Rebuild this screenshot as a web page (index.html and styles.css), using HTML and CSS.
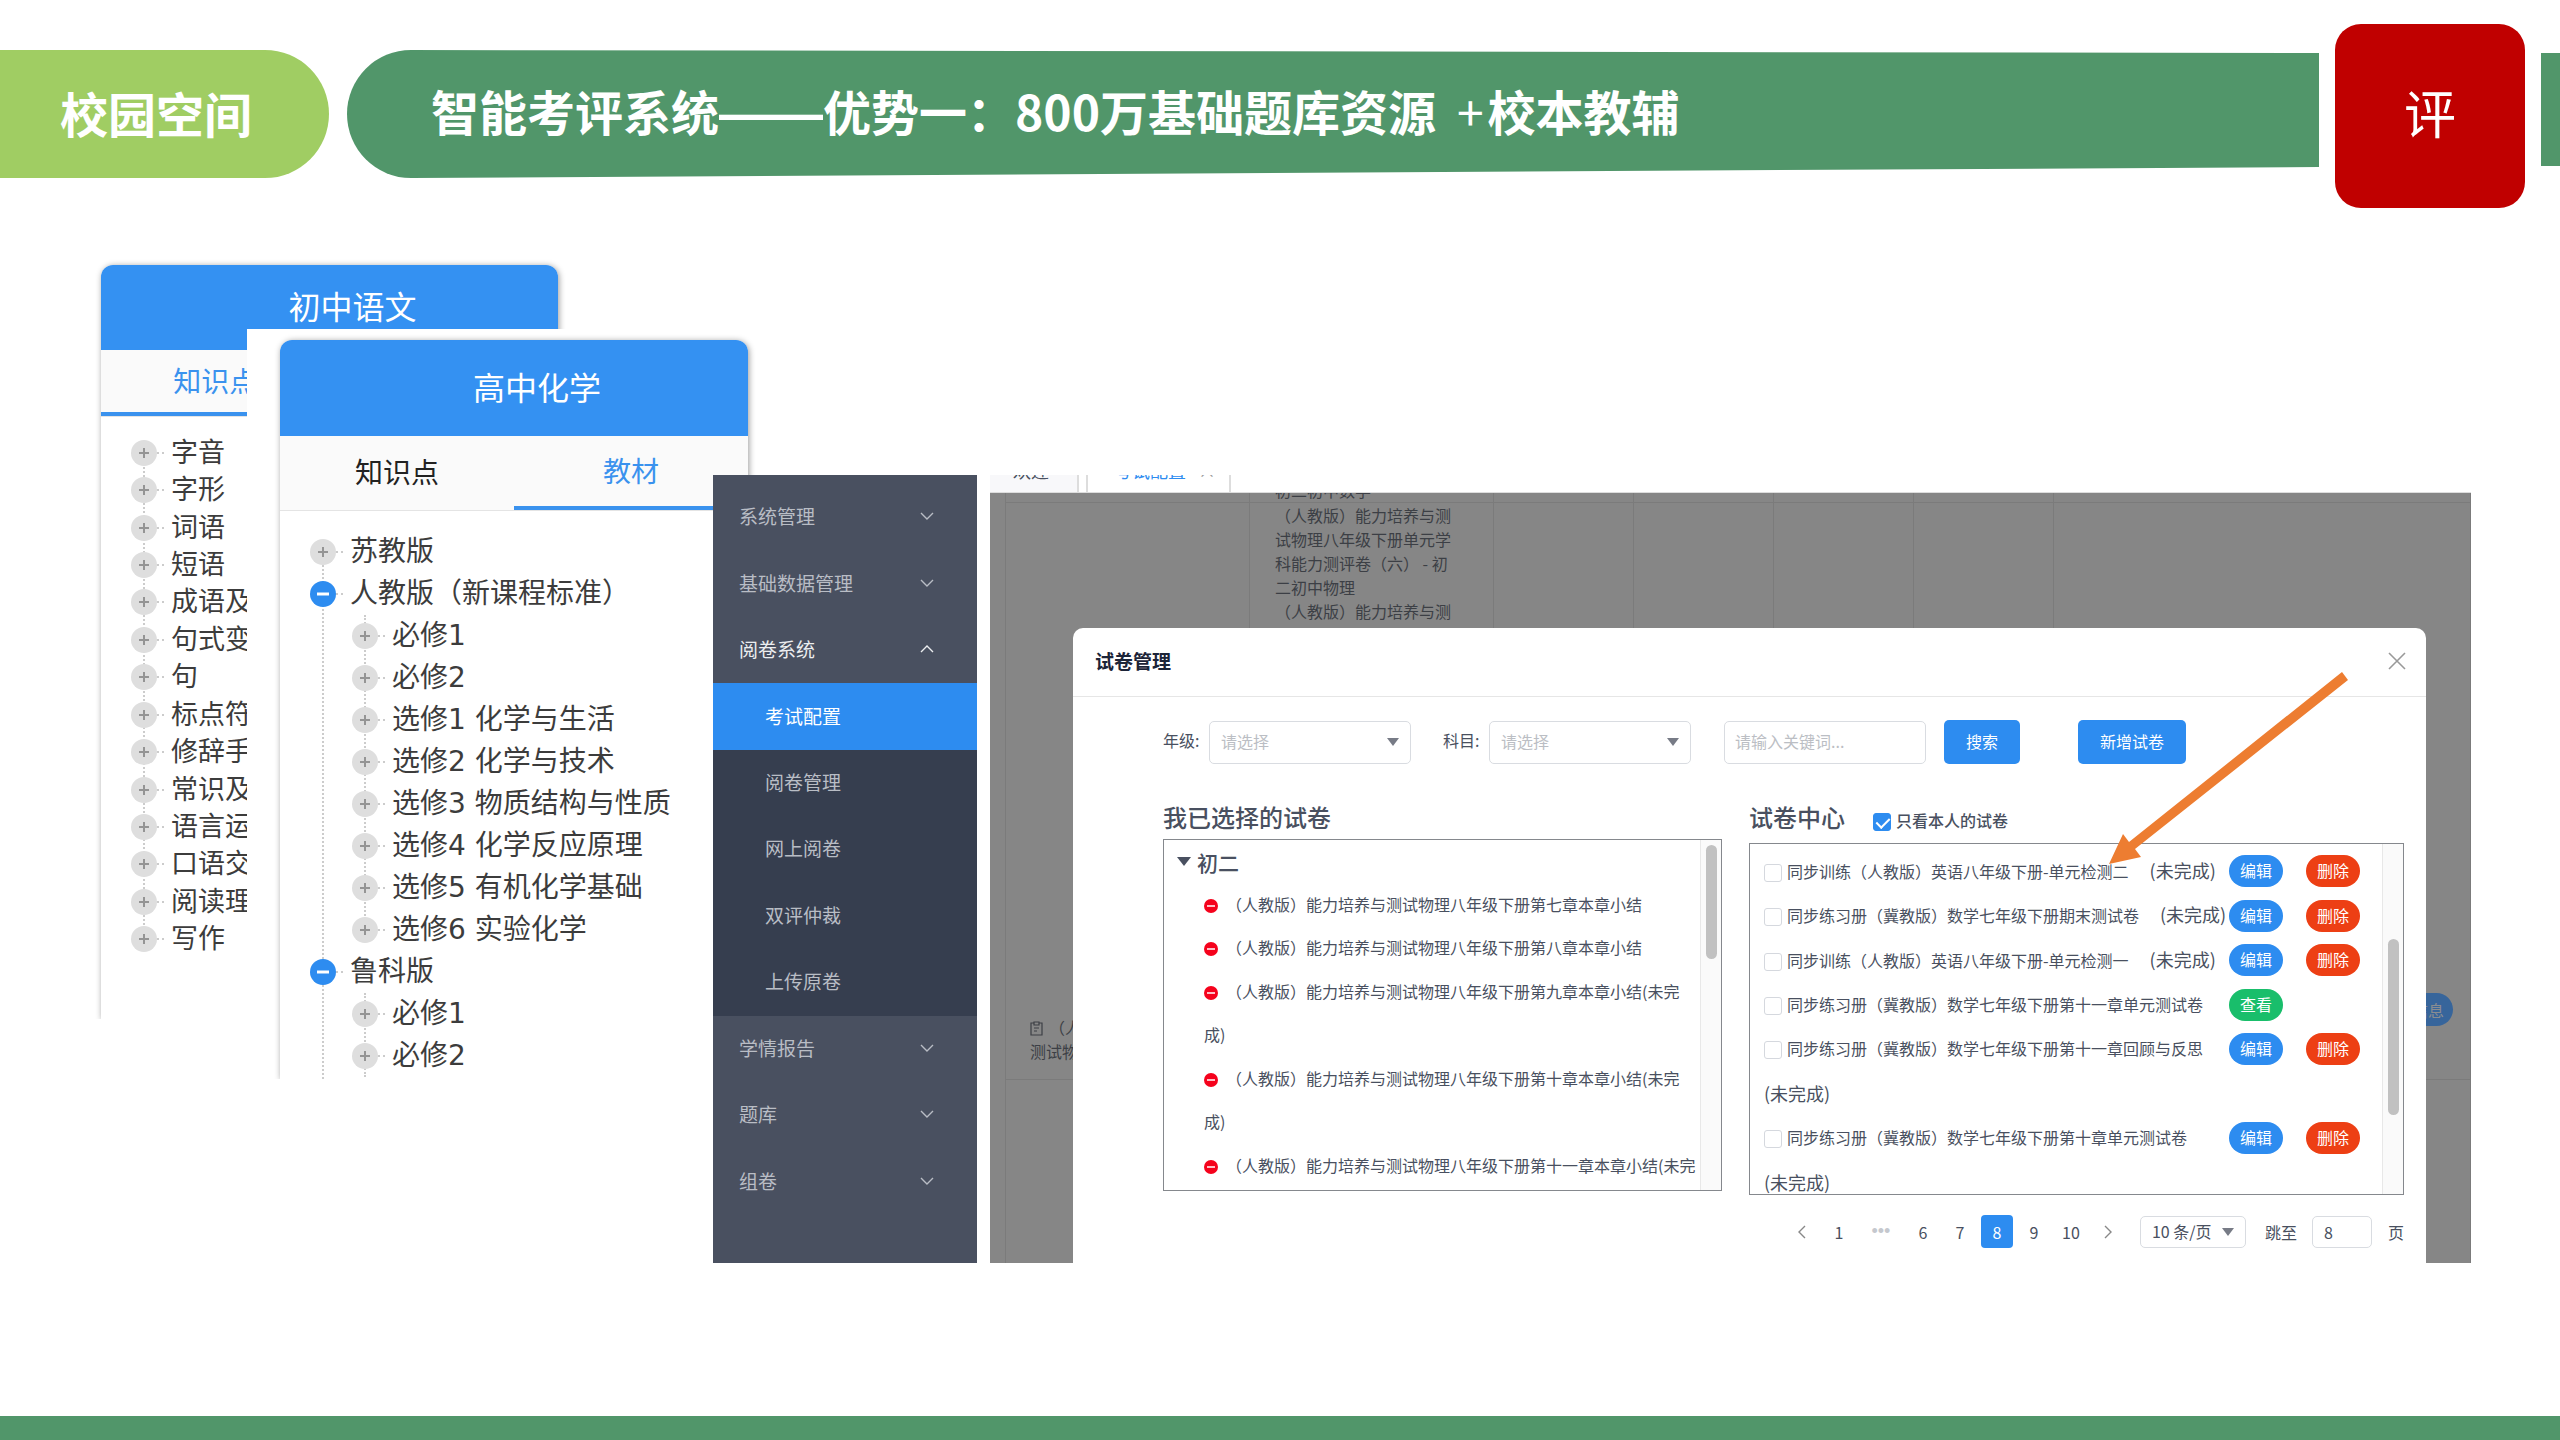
FILE: index.html
```html
<!DOCTYPE html>
<html lang="zh-CN">
<head>
<meta charset="utf-8">
<title>智能考评系统</title>
<link rel="stylesheet" href="styles.css">
</head>
<body>
<svg class="defs" aria-hidden="true">
  <symbol id="plus" viewBox="0 0 26 26"><circle cx="13" cy="13" r="13" fill="#dedede"/><path d="M8 13h10M13 8v10" stroke="#949494" stroke-width="2"/></symbol>
  <symbol id="minus" viewBox="0 0 26 26"><circle cx="13" cy="13" r="13" fill="#2d8cf0"/><path d="M7 13h12" stroke="#fff" stroke-width="3"/></symbol>
  <symbol id="down" viewBox="0 0 14 8"><path d="M1 1l6 6 6-6" fill="none" stroke="currentColor" stroke-width="1.4"/></symbol>
  <symbol id="up" viewBox="0 0 14 8"><path d="M1 7l6-6 6 6" fill="none" stroke="currentColor" stroke-width="1.4"/></symbol>
  <symbol id="remove" viewBox="0 0 14 14"><circle cx="7" cy="7" r="7" fill="#f5021c"/><path d="M3 7h8" stroke="#fff" stroke-width="1.5"/></symbol>
</svg>

<header class="banner">
  <div class="space">校园空间</div>
  <h1 class="title">智能考评系统<span class="dash">——</span>优势一：800万基础题库资源 <span class="and">+</span>校本教辅</h1>
  <div class="stamp">评</div>
  <div class="tail"></div>
</header>

<main class="stage">
  <section class="card card-junior">
    <h2 class="card-title">初中语文</h2>
    <div class="tabs"><button class="tab current">知识点</button><button class="tab">教材</button></div>
    <ul class="tree tree-flat">
      <li><svg class="node"><use href="#plus"/></svg>字音</li>
      <li><svg class="node"><use href="#plus"/></svg>字形</li>
      <li><svg class="node"><use href="#plus"/></svg>词语</li>
      <li><svg class="node"><use href="#plus"/></svg>短语</li>
      <li><svg class="node"><use href="#plus"/></svg>成语及</li>
      <li><svg class="node"><use href="#plus"/></svg>句式变</li>
      <li><svg class="node"><use href="#plus"/></svg>句</li>
      <li><svg class="node"><use href="#plus"/></svg>标点符</li>
      <li><svg class="node"><use href="#plus"/></svg>修辞手</li>
      <li><svg class="node"><use href="#plus"/></svg>常识及</li>
      <li><svg class="node"><use href="#plus"/></svg>语言运</li>
      <li><svg class="node"><use href="#plus"/></svg>口语交</li>
      <li><svg class="node"><use href="#plus"/></svg>阅读理</li>
      <li><svg class="node"><use href="#plus"/></svg>写作</li>
    </ul>
  </section>

  <div class="sheet">
    <section class="card card-senior">
      <h2 class="card-title">高中化学</h2>
      <div class="tabs"><button class="tab">知识点</button><button class="tab current">教材</button></div>
      <div class="tree tree-nested">
        <div class="entry"><svg class="node"><use href="#plus"/></svg>苏教版</div>
        <div class="entry"><svg class="node"><use href="#minus"/></svg>人教版（新课程标准）</div>
        <div class="branch">
          <div class="entry"><svg class="node"><use href="#plus"/></svg>必修1</div>
          <div class="entry"><svg class="node"><use href="#plus"/></svg>必修2</div>
          <div class="entry"><svg class="node"><use href="#plus"/></svg>选修1 化学与生活</div>
          <div class="entry"><svg class="node"><use href="#plus"/></svg>选修2 化学与技术</div>
          <div class="entry"><svg class="node"><use href="#plus"/></svg>选修3 物质结构与性质</div>
          <div class="entry"><svg class="node"><use href="#plus"/></svg>选修4 化学反应原理</div>
          <div class="entry"><svg class="node"><use href="#plus"/></svg>选修5 有机化学基础</div>
          <div class="entry"><svg class="node"><use href="#plus"/></svg>选修6 实验化学</div>
        </div>
        <div class="entry"><svg class="node"><use href="#minus"/></svg>鲁科版</div>
        <div class="branch open">
          <div class="entry"><svg class="node"><use href="#plus"/></svg>必修1</div>
          <div class="entry"><svg class="node"><use href="#plus"/></svg>必修2</div>
        </div>
      </div>
    </section>
  </div>

  <nav class="menu">
    <a class="item" href="#">系统管理<svg class="chev"><use href="#down"/></svg></a>
    <a class="item" href="#">基础数据管理<svg class="chev"><use href="#down"/></svg></a>
    <a class="item expanded" href="#">阅卷系统<svg class="chev"><use href="#up"/></svg></a>
    <a class="item sub active" href="#">考试配置</a>
    <a class="item sub" href="#">阅卷管理</a>
    <a class="item sub" href="#">网上阅卷</a>
    <a class="item sub" href="#">双评仲裁</a>
    <a class="item sub" href="#">上传原卷</a>
    <a class="item" href="#">学情报告<svg class="chev"><use href="#down"/></svg></a>
    <a class="item" href="#">题库<svg class="chev"><use href="#down"/></svg></a>
    <a class="item" href="#">组卷<svg class="chev"><use href="#down"/></svg></a>
  </nav>

  <section class="work">
    <div class="pages">
      <span class="page">欢迎</span>
      <span class="page page-on">考试配置<i class="page-x">×</i></span>
    </div>
    <div class="desk">
      <table class="grid">
        <colgroup><col class="c-wide"><col class="c-wide"><col class="c-mid"><col class="c-mid"><col class="c-mid"><col class="c-mid"><col></colgroup>
        <tr><td></td><td><div class="cut">初二初中数学</div></td><td></td><td></td><td></td><td></td><td></td></tr>
        <tr class="tall">
          <td class="low"><svg class="doc" viewBox="0 0 13 15"><path d="M4 2H1v12h11V2H9M4 1h5v3H4zM4 7h5M4 10h3" fill="none" stroke="#3c3f45" stroke-width="1.2"/></svg>（人教版）<br>测试物理</td>
          <td class="papers">（人教版）能力培养与测<br>试物理八年级下册单元学<br>科能力测评卷（六） - 初<br>二初中物理<br>（人教版）能力培养与测</td>
          <td></td><td></td><td></td><td></td>
          <td class="low-right"><button class="info">信息</button></td>
        </tr>
        <tr class="rest"><td></td><td></td><td></td><td></td><td></td><td></td><td></td></tr>
      </table>

      <div class="modal" role="dialog" aria-labelledby="dlg">
        <div class="modal-head">
          <h2 class="modal-title" id="dlg">试卷管理</h2>
          <button class="close" aria-label="关闭"><svg viewBox="0 0 18 18"><path d="M1 1l16 16M17 1L1 17" stroke="#999" stroke-width="1.6"/></svg></button>
        </div>
        <form class="filters">
          <label for="grade">年级:</label>
          <div class="pick"><select id="grade"><option>请选择</option></select></div>
          <label class="second" for="subject">科目:</label>
          <div class="pick"><select id="subject"><option>请选择</option></select></div>
          <input class="key" type="text" placeholder="请输入关键词..." aria-label="关键词">
          <button class="btn" type="button">搜索</button>
          <button class="btn btn-add" type="button">新增试卷</button>
        </form>
        <div class="cols">
          <section>
            <div class="head"><h3>我已选择的试卷</h3></div>
            <div class="box">
              <div class="chosen">
                <div class="grade-row">初二</div>
                <ul class="picked">
                  <li><svg class="rm"><use href="#remove"/></svg>（人教版）能力培养与测试物理八年级下册第七章本章小结</li>
                  <li><svg class="rm"><use href="#remove"/></svg>（人教版）能力培养与测试物理八年级下册第八章本章小结</li>
                  <li class="two"><svg class="rm"><use href="#remove"/></svg>（人教版）能力培养与测试物理八年级下册第九章本章小结(未完成)</li>
                  <li class="two"><svg class="rm"><use href="#remove"/></svg>（人教版）能力培养与测试物理八年级下册第十章本章小结(未完成)</li>
                  <li><svg class="rm"><use href="#remove"/></svg>（人教版）能力培养与测试物理八年级下册第十一章本章小结(未完</li>
                </ul>
              </div>
              <div class="track"><div class="thumb"></div></div>
            </div>
          </section>
          <section>
            <div class="head head-right"><h3>试卷中心</h3><label class="mine"><input class="tick" type="checkbox" checked>只看本人的试卷</label></div>
            <div class="box">
              <ul class="bank">
                <li><label><input class="tick" type="checkbox">同步训练（人教版）英语八年级下册-单元检测二<span class="todo">(未完成)</span></label><button class="pill">编辑</button><button class="pill red">删除</button></li>
                <li><label><input class="tick" type="checkbox">同步练习册（冀教版）数学七年级下册期末测试卷<span class="todo">(未完成)</span></label><button class="pill">编辑</button><button class="pill red">删除</button></li>
                <li><label><input class="tick" type="checkbox">同步训练（人教版）英语八年级下册-单元检测一<span class="todo">(未完成)</span></label><button class="pill">编辑</button><button class="pill red">删除</button></li>
                <li><label><input class="tick" type="checkbox">同步练习册（冀教版）数学七年级下册第十一章单元测试卷</label><button class="pill green">查看</button></li>
                <li><label><input class="tick" type="checkbox">同步练习册（冀教版）数学七年级下册第十一章回顾与反思</label><button class="pill">编辑</button><button class="pill red">删除</button></li>
                <li class="note">(未完成)</li>
                <li><label><input class="tick" type="checkbox">同步练习册（冀教版）数学七年级下册第十章单元测试卷</label><button class="pill">编辑</button><button class="pill red">删除</button></li>
                <li class="note">(未完成)</li>
              </ul>
              <div class="track"><div class="thumb thumb-mid"></div></div>
            </div>
            <div class="pager">
              <button class="pg" aria-label="上一页"><svg class="arrow" viewBox="0 0 8 14"><path d="M7 1L1 7l6 6" fill="none" stroke="#888" stroke-width="1.4"/></svg></button>
              <button class="pg">1</button>
              <span class="pg dots">•••</span>
              <button class="pg">6</button>
              <button class="pg">7</button>
              <button class="pg pg-on">8</button>
              <button class="pg">9</button>
              <button class="pg">10</button>
              <button class="pg" aria-label="下一页"><svg class="arrow" viewBox="0 0 8 14"><path d="M1 1l6 6-6 6" fill="none" stroke="#888" stroke-width="1.4"/></svg></button>
              <div class="pick size"><select aria-label="每页条数"><option>10 条/页</option></select></div>
              <label for="jump">跳至</label>
              <input class="jump" id="jump" type="text" value="8">
              <span>页</span>
            </div>
          </section>
        </div>
        <svg class="pointer" viewBox="0 0 240 194" aria-hidden="true"><path d="M0 192L14 162l6 8L233 0l6 8L26 177l6 8z" fill="#ed7d31"/></svg>
      </div>
    </div>
  </section>
</main>
<footer class="base"></footer>
</body>
</html>
```
FILE: styles.css
```css
* { box-sizing: border-box; }
body {
  margin: 0;
  min-height: 100vh;
  display: flex;
  flex-direction: column;
  background: #fff;
  color: #495060;
  font: 16px/24px "Noto Sans CJK SC", sans-serif;
  overflow-x: hidden;
}
h1, h2, h3, ul { margin: 0; padding: 0; list-style: none; }
button, input, select { font: inherit; color: inherit; margin: 0; }
button { border: 0; padding: 0; background: none; }
.defs { position: absolute; width: 0; height: 0; }

/* banner */
.banner { display: flex; padding-top: 24px; height: 265px; color: #fff; align-items: flex-start; }
.space, .title { height: 128px; margin-top: 26px; font-weight: 700; font-size: 48px; line-height: 120px; white-space: nowrap; }
.space { width: 329px; padding-left: 60px; background: #a0cd63; border-radius: 0 64px 64px 0; line-height: 125px; }
.title {
  flex: 1;
  margin-left: 18px;
  padding-left: 84px;
  background: #51966a;
  border-radius: 64px 0 0 64px;
  clip-path: polygon(0 0, 64px 0, 100% 3px, 100% 117px, 64px 100%, 0 100%);
}
.dash { font-family: "Liberation Sans", sans-serif; font-size: 52px; }
.and { margin: 0 4px 0 10px; font-weight: 400; }
.stamp { width: 190px; height: 184px; margin: 0 16px; border-radius: 26px; background: #c00000; font-size: 52px; line-height: 176px; text-align: center; }
.tail { width: 19px; height: 113px; margin-top: 29px; background: #51966a; }

/* overlapping panels */
.stage {
  flex: 1;
  display: grid;
  grid-template-columns: 101px 146px 466px 264px 13px 1fr 89px;
  grid-template-rows: 64px 146px auto;
  align-items: start;
  align-content: start;
}
.card { background: #fff; border-radius: 12px 12px 0 0; box-shadow: 1px 1px 6px rgba(0,0,0,.4); clip-path: inset(-10px -10px 0 -10px); }
.card-title { background: #3491f2; border-radius: 12px 12px 0 0; color: #fff; font-size: 32px; font-weight: 400; text-align: center; padding: 0 0 4px 46px; }
.tabs { display: grid; grid-template-columns: 1fr 1fr; background: #fafafa; border-bottom: 1px solid #e4e4e4; }
.tab { font-size: 28px; color: #222; padding: 0 0 4px; }
.tab.current { color: #3a92ee; border-bottom: 4px solid #3a92ee; padding: 0 0 2px; }
.tree { font-family: "DejaVu Sans", "Noto Sans CJK SC", sans-serif; color: #3c3c3c; position: relative; }
.node { width: 26px; height: 26px; flex: none; position: relative; }
.tree li, .entry { display: flex; align-items: center; gap: 14px; white-space: nowrap; position: relative; }
.tree li::before, .entry::before { content: ""; position: absolute; left: 26px; width: 7px; border-top: 2px dotted #ccc; }

.card-junior { grid-area: 1 / 2 / 4 / 4; width: 457px; height: 754px; }
.card-junior .card-title { line-height: 81px; }
.card-junior .tabs { height: 67px; }
.tree-flat { display: grid; grid-auto-rows: 1fr; height: 524px; margin: 17px 0 0 30px; font-size: 27px; }
.tree-flat::before { content: ""; position: absolute; left: 12px; top: 18px; bottom: 18px; border-left: 2px dotted #ccc; }

.sheet { grid-area: 2 / 3 / 4 / 6; width: 513px; padding: 11px 0 0 33px; background: #fff; position: relative; z-index: 1; }
.card-senior { width: 468px; }
.card-senior .card-title { line-height: 92px; }
.card-senior .tabs { height: 75px; }
.tree-nested { padding: 20px 0 2px 30px; font-size: 28px; }
.tree-nested::before { content: ""; position: absolute; left: 42px; top: 42px; bottom: 0; border-left: 2px dotted #ccc; }
.entry { height: 42px; }
.branch { margin-left: 42px; position: relative; }
.branch::before { content: ""; position: absolute; left: 12px; top: 0; bottom: 20px; border-left: 2px dotted #ccc; }
.branch.open::before { bottom: 0; }

/* side menu */
.menu { grid-area: 3 / 4; display: grid; grid-auto-rows: 1fr; height: 788px; padding: 9px 0 48px; background: #495060; position: relative; z-index: 2; }
.item { display: flex; align-items: center; justify-content: space-between; padding: 0 43px 2px 26px; font-size: 19px; color: #b9bdc5; text-decoration: none; }
.chev { width: 14px; height: 8px; }
.expanded { color: #eceef0; }
.sub { padding-left: 52px; background: #363e4f; }
.active { background: #2d8cf0; color: #fff; }

/* work area */
.work { grid-area: 3 / 6; display: flex; flex-direction: column; height: 788px; overflow: hidden; }
.pages { flex: none; display: flex; align-items: flex-end; gap: 7px; height: 18px; border-bottom: 1px solid #ddd; font-size: 18px; line-height: 26px; overflow: hidden; }
.page { width: 89px; padding: 0 0 9px 23px; background: #f8f8fa; border-right: 2px solid #ddd; white-space: nowrap; }
.page-on { width: 145px; padding-left: 26px; background: #fff; border-left: 2px solid #ddd; color: #2d8cf0; }
.page-x { margin-left: 12px; color: #999; font-style: normal; }
.desk { flex: 1; display: grid; align-items: start; background: #868686; color: #3c3f45; min-height: 0; }
.grid { grid-area: 1 / 1; width: calc(100% - 15px); margin-left: 15px; border-collapse: collapse; table-layout: fixed; }
.grid td { padding: 0; vertical-align: top; border: 1px solid #7b7b7b; border-top: 0; }
.tall { height: 577px; }
.rest { height: 185px; }
.c-wide { width: 244px; }
.c-mid { width: 140px; }
.cut { height: 9px; padding-left: 25px; display: flex; align-items: flex-end; overflow: hidden; }
.grid td.papers { padding-left: 25px; white-space: nowrap; }
.grid td.low { padding: 512px 0 0 24px; }
.grid td.low-right { padding: 490px 17px 0 0; text-align: right; }
.doc { width: 13px; height: 15px; margin-right: 6px; vertical-align: -2px; }
.info { width: 86px; height: 33px; border-radius: 17px; background: #37659b; color: #8a8d91; padding-left: 36px; }

/* dialog */
.modal { grid-area: 1 / 1; height: 636px; margin: 135px 45px 0 83px; background: #fff; border-radius: 10px 10px 0 0; color: #495060; position: relative; }
.modal-head { display: flex; justify-content: space-between; align-items: center; height: 69px; padding: 0 20px 2px 22px; border-bottom: 1px solid #e6e6e6; }
.modal-title { font-size: 19px; font-weight: 700; color: #1c2438; }
.close { width: 18px; height: 18px; line-height: 0; }
.filters { display: flex; align-items: center; padding: 23px 0 0 90px; }
.filters label { width: 46px; padding-bottom: 4px; }
.filters .second { margin-left: 32px; }
.pick { position: relative; width: 202px; height: 43px; }
.pick select { width: 100%; height: 100%; padding: 0 11px 2px; appearance: none; background: #fff; border: 1px solid #d9dce1; border-radius: 5px; color: #bbbec4; }
.pick::after { content: ""; position: absolute; right: 12px; top: 50%; margin-top: -4px; border: 6px solid transparent; border-top: 8px solid #777b86; border-bottom: 0; }
.key { width: 202px; height: 43px; margin-left: 33px; padding: 0 10px 2px; border: 1px solid #d9dce1; border-radius: 5px; }
.key::placeholder { color: #bbbec4; }
.btn { width: 76px; height: 44px; margin-left: 18px; padding-bottom: 2px; border-radius: 5px; background: #2d8cf0; color: #fff; }
.btn-add { width: 108px; margin-left: 58px; }
.cols { display: grid; grid-template-columns: 559fr 655fr; gap: 27px; padding: 35px 22px 0 90px; }
.head { display: flex; align-items: baseline; height: 40px; line-height: 36px; }
.head h3, .mine, .grade-row { font-family: "Noto Sans CJK SC Medium", "Noto Sans CJK SC", sans-serif; font-weight: 500; }
.head h3 { font-size: 24px; }
.head-right { height: 44px; }
.mine { margin-left: 28px; }
.tick { appearance: none; width: 18px; height: 18px; margin-right: 5px; border: 1px solid #d5d8de; border-radius: 3px; background: #fff; vertical-align: -4px; }
.tick:checked { border-color: #2d8cf0; background: #2d8cf0; position: relative; }
.tick:checked::after { content: ""; position: absolute; left: 5px; top: 1px; width: 6px; height: 11px; border: solid #fff; border-width: 0 2px 2px 0; transform: rotate(45deg); }
.box { display: flex; height: 352px; border: 1px solid #85888d; overflow: hidden; }
.chosen { flex: 1; padding-left: 40px; }
.grade-row { display: flex; align-items: center; gap: 6px; height: 43px; margin-left: -27px; font-size: 21px; }
.grade-row::before { content: ""; border: 7px solid transparent; border-top: 9px solid #495060; border-bottom: 0; }
.picked { display: grid; grid-auto-rows: 1fr; height: 304px; line-height: 43px; margin-right: 2px; }
.two { grid-row: span 2; }
.rm { width: 14px; height: 14px; margin-right: 8px; vertical-align: -2px; }
.track { width: 21px; flex: none; padding: 5px; background: #fafafa; border-left: 1px solid #e8e8e8; }
.thumb { width: 11px; height: 114px; border-radius: 6px; background: #c1c1c1; }
.thumb-mid { height: 176px; margin-top: 90px; }
.bank { flex: 1; display: grid; grid-auto-rows: 1fr; height: 356px; margin-top: 5px; padding-left: 14px; }
.bank li { display: grid; grid-template-columns: 465px 77px auto; align-items: center; white-space: nowrap; }
.bank label, .bank .note { padding-bottom: 2px; }
.bank .todo { margin-left: 21px; }
.todo, .note { font-size: 18px; }
.pill { width: 54px; height: 32px; padding-bottom: 2px; border-radius: 16px; background: #2d8cf0; color: #fff; }
.red { background: #ed3f14; }
.green { background: #19be6b; }
.pager { display: flex; justify-content: flex-end; align-items: center; height: 68px; padding-top: 5px; }
.pg { width: 32px; height: 33px; line-height: 32px; margin-right: 5px; border-radius: 4px; text-align: center; }
.dots { width: 42px; font-family: "Liberation Sans", sans-serif; font-size: 18px; color: #c5c8ce; }
.pg-on { background: #2d8cf0; color: #fff; }
.arrow { width: 8px; height: 14px; }
.pager .size { width: 106px; height: 32px; margin: 0 19px 0 11px; }
.size select { color: #495060; }
.jump { width: 60px; height: 32px; margin: 0 16px 0 15px; padding: 0 11px; border: 1px solid #d9dce1; border-radius: 5px; }
.pointer { position: absolute; right: 77px; top: 44px; width: 240px; height: 194px; }

.base { height: 24px; background: #51966a; }
```
